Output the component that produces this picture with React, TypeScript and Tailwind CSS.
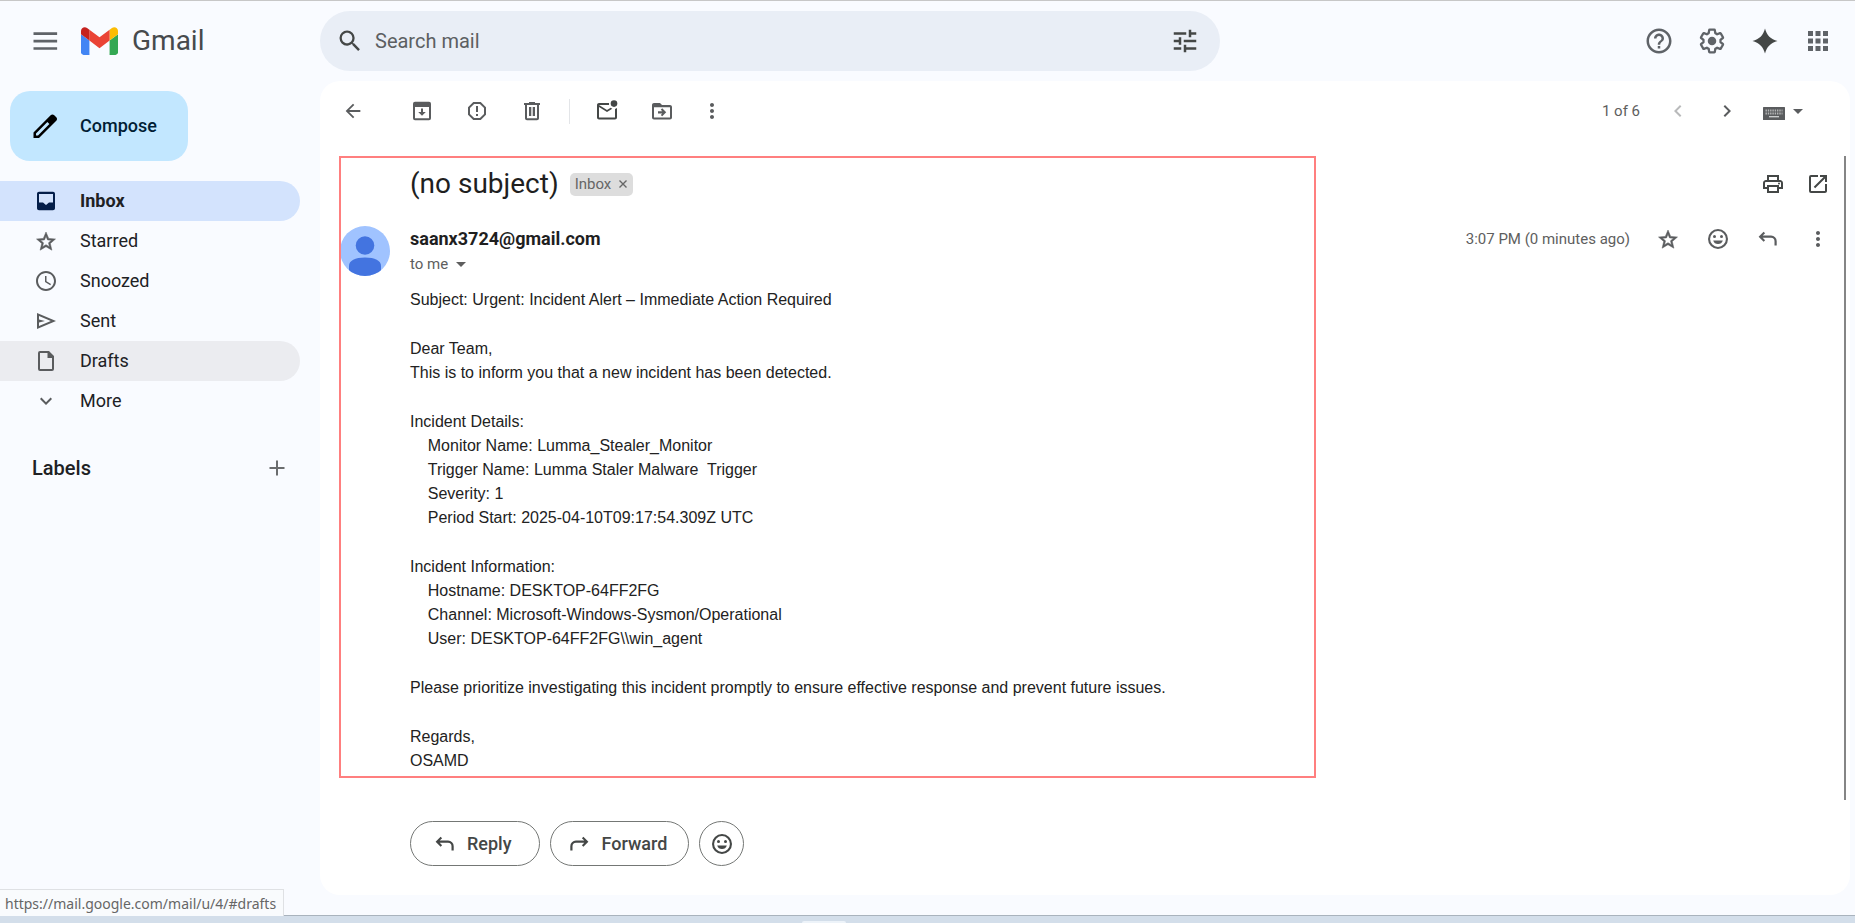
import React from "react";
import {
  MdSearch, MdTune, MdHelpOutline, MdApps, MdArrowBack, MdMoreVert,
  MdChevronLeft, MdChevronRight, MdOutlinePrint, MdOpenInNew,
  MdOutlineSchedule, MdExpandMore, MdReportGmailerrorred,
} from "react-icons/md";

type IconProps = { className?: string };

function Svg({ className = "size-6", children }: IconProps & { children: React.ReactNode }) {
  return (
    <svg viewBox="0 0 24 24" fill="currentColor" className={className} aria-hidden="true">
      {children}
    </svg>
  );
}

const MenuIcon = ({ className }: IconProps) => (
  <Svg className={className}><path d="M2.800 5h18.900v2.100H2.800zM2.800 11h18.900v2.100H2.800zM2.800 16.900h18.900V19H2.800z" /></Svg>
);
const PencilIcon = ({ className }: IconProps) => (
  <Svg className={className}>
    <path fillRule="evenodd" d="M21 4.900 19.400 3.300c-.8-.8-2.100-.8-2.900 0L2.800 17.100v4.400h4.400L21 7.800c.8-.8.8-2.100 0-2.900ZM6.400 19.500H4.800v-1.600L13.900 8.800l1.600 1.600Z" />
  </Svg>
);
const InboxIcon = ({ className }: IconProps) => (
  <Svg className={className}>
    <path fillRule="evenodd" d="M19 2.700H5c-1.100 0-2 .9-2 2v14.600c0 1.100.9 2 2 2h14c1.100 0 2-.9 2-2V4.700c0-1.100-.9-2-2-2Zm0 10.800h-4L12 16l-3-2.500H5V5h14Z" />
  </Svg>
);
const SendIcon = ({ className }: IconProps) => (
  <Svg className={className}>
    <path fillRule="evenodd" d="M3 4v16l19-8Zm2 3 11.800 5L5 17v-3.500l6-1.500-6-1.500Z" />
  </Svg>
);
const DraftIcon = ({ className }: IconProps) => (
  <Svg className={className}>
    <path fillRule="evenodd" d="M15 2H6a2 2 0 0 0-2 2v16a2 2 0 0 0 2 2h12a2 2 0 0 0 2-2V7Zm3 18H6V4h7.500v5H18Z" />
  </Svg>
);
const ArchiveIcon = ({ className }: IconProps) => (
  <Svg className={className}>
    <path fillRule="evenodd" d="M5 2.700h14a2 2 0 0 1 2 2v14.600a2 2 0 0 1-2 2H5a2 2 0 0 1-2-2V4.700a2 2 0 0 1 2-2ZM5 8v11.300h14V8Z" />
    <path d="M11 9.500h2V13h2.800L12 16.800 8.200 13H11Z" />
  </Svg>
);
const TrashIcon = ({ className }: IconProps) => (
  <Svg className={className}>
    <path fillRule="evenodd" d="M15 4V3H9v1H4v2h1v13.200c0 1.100.9 2 2 2h10c1.100 0 2-.9 2-2V6h1V4Zm2 15.200H7V6h10ZM9 8h2.300v9H9Zm3.700 0H15v9h-2.300Z" />
  </Svg>
);
const UnreadIcon = ({ className }: IconProps) => (
  <Svg className={className}>
    <path fillRule="evenodd" d="M22 8.980V18.500c0 1.100-.9 2-2 2H4c-1.100 0-2-.9-2-2V6c0-1.100.9-2 2-2h10.100a5 5 0 0 0 0 2H4l8 5 3.670-2.290c.47.43 1.020.76 1.630.98L12 13 4 8v10.500h16V9.900a5 5 0 0 0 2-.92Z" />
    <circle cx="19" cy="4.600" r="3.300" />
  </Svg>
);
const MoveIcon = ({ className }: IconProps) => (
  <Svg className={className}>
    <path fillRule="evenodd" d="M20 6h-8l-2-2H4c-1.100 0-2 .9-2 2v12.500c0 1.100.9 2 2 2h16c1.100 0 2-.9 2-2V8c0-1.100-.9-2-2-2Zm0 12.500H4V8.300h16Z" />
    <path d="m12.200 9.300 4 4-4 4-1.400-1.400 1.500-1.500H8v-2.200h4.300l-1.500-1.500Z" />
  </Svg>
);
const ReplyIcon = ({ className }: IconProps) => (
  <Svg className={className}>
    <path d="M7.600 4.700 2.600 9.700l5 5L9.100 13.200l-2.400-2.400H15a3.500 3.500 0 0 1 3.500 3.500V18.500h2.200v-4.200A5.600 5.600 0 0 0 15 8.600H6.700l2.400-2.400Z" />
  </Svg>
);
const StarIcon = ({ className }: IconProps) => (
  <Svg className={className}>
    <path
      stroke="currentColor"
      strokeWidth="0.500"
      fillRule="evenodd"
      d="M21.500 10l-6.800-.6L12 3 9.300 9.400l-6.800.6 5.200 4.500L6.100 21.200 12 17.700l5.900 3.500-1.600-6.700ZM12 15.700l-3.400 2 .9-3.900-3-2.600 4-.3L12 7.300l1.500 3.600 4 .3-3 2.600.9 3.900Z"
    />
  </Svg>
);
const SmileIcon = ({ className }: IconProps) => (
  <Svg className={className}>
    <path fillRule="evenodd" d="M12 2a10 10 0 1 0 0 20 10 10 0 0 0 0-20Zm0 17.900a7.900 7.900 0 1 1 0-15.800 7.900 7.900 0 0 1 0 15.800Z" />
    <circle cx="8.500" cy="9.500" r="1.500" />
    <circle cx="15.500" cy="9.500" r="1.500" />
    <path d="M7.200 13.500h9.600a5 5 0 0 1-9.600 0Z" />
  </Svg>
);
const SparkIcon = ({ className }: IconProps) => (
  <Svg className={className}>
    <path d="M12 2c1.300 5.300 4.700 8.700 10 10-5.300 1.300-8.700 4.700-10 10-1.300-5.300-4.700-8.700-10-10 5.300-1.300 8.700-4.700 10-10Z" />
  </Svg>
);
const GearIcon = ({ className }: IconProps) => (
  <Svg className={className}>
    <path
      transform="translate(1.080 1.080) scale(0.910)"
      fill="none"
      stroke="currentColor"
      strokeWidth="2"
      strokeLinejoin="round"
      d="M19.430 12.980c.04-.32.07-.64.07-.98s-.03-.66-.07-.98l2.110-1.650c.19-.15.24-.42.12-.64l-2-3.460c-.12-.22-.39-.3-.61-.22l-2.490 1c-.52-.4-1.080-.73-1.690-.98l-.38-2.650C14.460 2.180 14.250 2 14 2h-4c-.25 0-.46.18-.49.42l-.38 2.650c-.61.25-1.170.59-1.690.98l-2.490-1c-.23-.09-.49 0-.61.22l-2 3.460c-.13.22-.07.49.12.64l2.110 1.650c-.04.32-.07.65-.07.98s.03.66.07.98l-2.110 1.650c-.19.15-.24.42-.12.64l2 3.460c.12.22.39.3.61.22l2.490-1c.52.4 1.080.73 1.690.98l.38 2.650c.03.24.24.42.49.42h4c.25 0 .46-.18.49-.42l.38-2.650c.61-.25 1.170-.59 1.690-.98l2.490 1c.23.09.49 0 .61-.22l2-3.460c.12-.22.07-.49-.12-.64l-2.110-1.650Z"
    />
    <circle cx="12" cy="12" r="3.400" />
  </Svg>
);
const PlusIcon = ({ className }: IconProps) => (
  <Svg className={className}><path d="M11 4.500h2V11h6.500v2H13v6.500h-2V13H4.500v-2H11Z" /></Svg>
);
const KeyboardIcon = ({ className }: IconProps) => (
  <svg viewBox="0 0 22 13" className={className} aria-hidden="true">
    <rect width="22" height="13" rx="0.500" fill="currentColor" />
    <path d="M2.500 3.500h17M2.500 6.500h17" stroke="#b4b5b6" strokeWidth="2" strokeDasharray="1.400 0.900" />
    <path d="M6 9.700h10" stroke="#d0d1d2" strokeWidth="1.300" />
  </svg>
);
const CaretIcon = ({ className }: IconProps) => (
  <svg viewBox="0 0 10 5" fill="currentColor" className={className} aria-hidden="true"><path d="M0 0h10L5 5Z" /></svg>
);

function GmailLogo() {
  return (
    <svg viewBox="0 0 88 66" className="h-7 w-[37px]" aria-hidden="true">
      <path fill="#4285f4" d="M6 66h14V32L0 17v43c0 3.300 2.700 6 6 6" />
      <path fill="#34a853" d="M68 66h14c3.300 0 6-2.700 6-6V17L68 32" />
      <path fill="#fbbc04" d="M68 6v26l20-15V9c0-7.400-8.500-11.600-14.400-7.200" />
      <path fill="#ea4335" d="M20 32V6l24 18L68 6v26L44 50" />
      <path fill="#c5221f" d="M0 9v8l20 15V6l-5.600-4.200C8.500-2.600 0 1.600 0 9" />
    </svg>
  );
}

function IconButton({ label, className = "size-6", children }: { label: string; className?: string; children: React.ReactNode }) {
  return (
    <button type="button" aria-label={label} className={`flex shrink-0 items-center justify-center ${className}`}>
      {children}
    </button>
  );
}

const navItems = [
  { label: "Inbox", icon: <InboxIcon />, row: "bg-[#d3e3fd] font-bold text-[#001d35]", tint: "text-[#041e49]" },
  { label: "Starred", icon: <StarIcon />, row: "", tint: "text-[#5a5c5e]" },
  { label: "Snoozed", icon: <MdOutlineSchedule className="size-6" />, row: "", tint: "text-[#5a5c5e]" },
  { label: "Sent", icon: <SendIcon />, row: "", tint: "text-[#5a5c5e]" },
  { label: "Drafts", icon: <DraftIcon />, row: "bg-[#ebecf0]", tint: "text-[#5a5c5e]" },
  { label: "More", icon: <MdExpandMore className="size-6" />, row: "", tint: "text-[#5a5c5e]" },
];

const paragraphs = [
  ["Subject: Urgent: Incident Alert – Immediate Action Required"],
  ["Dear Team,", "This is to inform you that a new incident has been detected."],
  [
    "Incident Details:",
    "    Monitor Name: Lumma_Stealer_Monitor",
    "    Trigger Name: Lumma Staler Malware  Trigger",
    "    Severity: 1",
    "    Period Start: 2025-04-10T09:17:54.309Z UTC",
  ],
  [
    "Incident Information:",
    "    Hostname: DESKTOP-64FF2FG",
    "    Channel: Microsoft-Windows-Sysmon/Operational",
    "    User: DESKTOP-64FF2FG\\\\win_agent",
  ],
  ["Please prioritize investigating this incident promptly to ensure effective response and prevent future issues."],
  ["Regards,", "OSAMD"],
];

function Header() {
  return (
    <header className="flex h-20 items-center pb-px">
      <div className="flex w-80 shrink-0 items-center pl-[30px]">
        <IconButton label="Main menu" className="size-[30px] text-[#5f6368]"><MenuIcon className="size-[30px]" /></IconButton>
        <a href="#inbox" className="ml-[21px] flex items-center gap-[14px] text-[28px] leading-8 text-[#474a4d]">
          <GmailLogo />
          Gmail
        </a>
      </div>
      <form role="search" className="flex h-[60px] w-[900px] items-center rounded-full bg-[#e9eef6] pr-5 pl-4 text-[#444746]">
        <IconButton label="Search" className="size-7"><MdSearch className="size-7" /></IconButton>
        <input type="search" aria-label="Search mail" placeholder="Search mail" className="ml-[11px] min-w-0 flex-1 bg-transparent text-xl outline-none placeholder:text-[#5c5f62]" />
        <IconButton label="Show search options" className="size-[30px]"><MdTune className="size-[30px]" /></IconButton>
      </form>
      <div className="ml-auto flex items-center gap-[23px] pr-[22px] text-[#5f6368]">
        <IconButton label="Support" className="size-[30px]"><MdHelpOutline className="size-[30px]" /></IconButton>
        <IconButton label="Settings" className="size-[30px]"><GearIcon className="size-[30px]" /></IconButton>
        <IconButton label="Ask Gemini" className="size-[30px] text-[#444746]"><SparkIcon className="size-[30px]" /></IconButton>
        <IconButton label="Google apps" className="size-[30px]"><MdApps className="size-[30px]" /></IconButton>
      </div>
    </header>
  );
}

function Sidebar() {
  return (
    <aside className="flex w-80 shrink-0 flex-col pt-[10px]">
      <button type="button" className="ml-[10px] flex h-[70px] w-[178px] items-center gap-5 rounded-[20px] bg-[#c2e7ff] pl-5 text-lg font-medium text-[#001d35]">
        <PencilIcon className="size-[30px] text-black" />
        Compose
      </button>
      <nav className="mt-5 mr-5">
        {navItems.map((item) => (
          <a key={item.label} href={`#${item.label.toLowerCase()}`} className={`flex h-10 items-center gap-[22px] rounded-r-full pl-[34px] text-lg text-[#202124] ${item.row}`}>
            <span className={item.tint}>{item.icon}</span>
            {item.label}
          </a>
        ))}
      </nav>
      <div className="mt-[33px] flex items-center justify-between pr-[31px] pl-8">
        <h2 className="text-xl font-medium text-[#202124]">Labels</h2>
        <IconButton label="Create new label" className="size-6 text-[#6a6c6e]"><PlusIcon /></IconButton>
      </div>
    </aside>
  );
}

function Toolbar() {
  return (
    <div className="flex h-[60px] shrink-0 items-center pl-[21px] text-[#5a5c5e]">
      <IconButton label="Back to inbox"><MdArrowBack className="size-[22px]" /></IconButton>
      <div className="ml-[45px] flex items-center gap-[31px]">
        <IconButton label="Archive"><ArchiveIcon /></IconButton>
        <IconButton label="Report spam"><MdReportGmailerrorred className="size-6" /></IconButton>
        <IconButton label="Delete"><TrashIcon /></IconButton>
      </div>
      <div className="mx-[25px] h-[25px] w-px bg-[#e3e5e8]" />
      <div className="flex items-center gap-[31px]">
        <IconButton label="Mark as unread" className="size-6 text-[#444746]"><UnreadIcon /></IconButton>
        <IconButton label="Move to"><MoveIcon /></IconButton>
      </div>
      <IconButton label="More options" className="ml-[26px] size-6"><MdMoreVert className="size-6" /></IconButton>
      <div className="ml-auto flex items-center pr-[47px]">
        <span className="text-[15px] text-[#5e5e5e]">1 of 6</span>
        <IconButton label="Newer" className="ml-[26px] size-6 text-[#b9babb]"><MdChevronLeft className="size-6" /></IconButton>
        <IconButton label="Older" className="ml-[25px] size-6"><MdChevronRight className="size-6" /></IconButton>
        <button type="button" aria-label="Select input tool" className="ml-6 flex items-center gap-2">
          <KeyboardIcon className="mt-1 h-[13px] w-[22px]" />
          <CaretIcon className="h-[5px] w-[10px]" />
        </button>
      </div>
    </div>
  );
}

function Message() {
  return (
    <article className="flex min-h-0 flex-1 pl-5">
      <div className="w-[70px] shrink-0 pt-[85px]">
        <svg viewBox="0 0 50 50" className="size-[50px]" role="img" aria-label="Sender">
          <clipPath id="avatar"><circle cx="25" cy="25" r="25" /></clipPath>
          <g clipPath="url(#avatar)">
            <rect width="50" height="50" fill="#a0c3ff" />
            <circle cx="25" cy="19.500" r="9.300" fill="#4374e0" />
            <path fill="#4374e0" d="M9 50V40c0-5.500 6-8.500 16-8.500S41 34.500 41 40v10Z" />
          </g>
        </svg>
      </div>
      <div className="min-w-0 flex-1 pt-6">
        <div className="flex h-[38px] items-center pr-5">
          <h1 className="text-[28px] leading-9 text-[#1f1f1f]">(no subject)</h1>
          <span className="ml-[11px] flex h-[23px] items-center gap-[7px] rounded-[5px] bg-[#ddd] px-[5px] text-[15px] text-[#666]">
            Inbox
            <button type="button" aria-label="Remove label Inbox" className="flex size-[10px] items-center justify-center">
              <svg viewBox="0 0 10 10" className="size-[10px]" stroke="currentColor" strokeWidth="1.400" aria-hidden="true"><path d="m1.500 1.500 7 7m0-7-7 7" /></svg>
            </button>
          </span>
          <div className="ml-auto flex gap-[21px] text-[#444746]">
            <IconButton label="Print all"><MdOutlinePrint className="size-6" /></IconButton>
            <IconButton label="In new window"><MdOpenInNew className="size-6" /></IconButton>
          </div>
        </div>
        <div className="mt-6 flex h-6 items-center pr-5">
          <span className="text-lg font-bold text-[#1f1f1f]">saanx3724@gmail.com</span>
          <div className="ml-auto flex items-center text-[#5a5c5e]">
            <time className="mr-[26px] text-[15px] text-[#5e5e5e]">3:07 PM (0 minutes ago)</time>
            <div className="flex items-center gap-[26px]">
              <IconButton label="Star"><StarIcon /></IconButton>
              <IconButton label="Add reaction"><SmileIcon /></IconButton>
              <IconButton label="Reply"><ReplyIcon /></IconButton>
              <IconButton label="More"><MdMoreVert className="size-6" /></IconButton>
            </div>
          </div>
        </div>
        <button type="button" aria-label="Show details" className="mt-px flex h-6 items-center gap-2 text-[15px] text-[#5e5e5e]">
          to me
          <CaretIcon className="h-[5px] w-[10px]" />
        </button>
        <div className="mt-3 flex flex-col gap-[25px] font-['Liberation_Sans',Arial,sans-serif] text-base leading-6 whitespace-pre-wrap text-[#222]">
          {paragraphs.map((lines) => (
            <p key={lines[0]}>{lines.join("\n")}</p>
          ))}
        </div>
        <div className="mt-12 flex gap-[10px] text-lg font-medium text-[#444746]">
          <button type="button" className="flex h-[45px] items-center gap-[10px] rounded-full border border-[#747775] pr-[27px] pl-[22px]"><ReplyIcon />Reply</button>
          <button type="button" className="flex h-[45px] items-center gap-[11px] rounded-full border border-[#747775] pr-[21px] pl-4"><ReplyIcon className="size-6 -scale-x-100" />Forward</button>
          <button type="button" aria-label="Add emoji reaction" className="flex size-[45px] items-center justify-center rounded-full border border-[#747775]"><SmileIcon /></button>
        </div>
      </div>
    </article>
  );
}

export default function App() {
  return (
    <div className="flex min-h-screen flex-col border-t border-[#c7c7c7] bg-[#f9fbff] font-[Roboto,'Noto_Sans',sans-serif] text-[#1f1f1f]">
      <Header />
      <div className="flex flex-1">
        <Sidebar />
        <main className="relative mr-[5px] mb-5 flex min-w-0 flex-1 flex-col rounded-[20px] bg-white">
          <Toolbar />
          <Message />
          <div className="pointer-events-none absolute top-[75px] left-[19px] h-[622px] w-[977px] border-2 border-[#ff7f7f]" />
          <div className="absolute top-[75px] right-1 h-[644px] w-0.5 bg-[#858585]" />
        </main>
      </div>
      <div className="relative h-2 border-t border-[#a9b3bd] bg-[#d3deea]">
        <div className="absolute bottom-full left-0 flex h-[27px] w-[284px] items-center border-t border-r border-[#dfe1e4] bg-[#f9fbfd] pt-0.5 pl-[5px] font-['Noto_Sans',sans-serif] text-sm text-[#666]">
          https://mail.google.com/mail/u/4/#drafts
        </div>
        <div className="absolute bottom-0 left-[802px] h-0.5 w-11 rounded-t bg-[#edf3f9]" />
      </div>
    </div>
  );
}
